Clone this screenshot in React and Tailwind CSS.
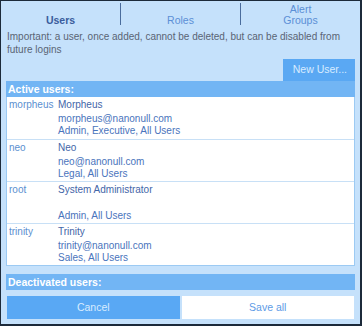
import React from "react";

const users = [
  { login: "morpheus", name: "Morpheus", email: "morpheus@nanonull.com", groups: "Admin, Executive, All Users" },
  { login: "neo", name: "Neo", email: "neo@nanonull.com", groups: "Legal, All Users" },
  { login: "root", name: "System Administrator", email: "", groups: "Admin, All Users" },
  { login: "trinity", name: "Trinity", email: "trinity@nanonull.com", groups: "Sales, All Users" },
];

const App = () => {
  return (
    <div className="w-[362px] h-[326px] bg-[#1c2a3a] p-px font-['Liberation_Sans',Arial,sans-serif] text-[10px]">
      <div className="h-[323px] w-[359px] bg-[#c5e1fb] flex flex-col">
        {/* tabs */}
        <div className="flex h-[26px] leading-[11px] text-[10.5px]">
          <div className="flex-1 flex items-end justify-center pb-[1px] font-bold text-[#3a5c9c]">Users</div>
          <div className="w-px bg-[#4a6c9c] my-[2px]" />
          <div className="flex-1 flex items-end justify-center pb-[1px] text-[#5b8fd6]">Roles</div>
          <div className="w-px bg-[#4a6c9c] my-[2px]" />
          <div className="flex-1 flex flex-col items-center justify-end pb-[1px] text-[#5b8fd6] leading-[11px]">
            <span>Alert</span>
            <span>Groups</span>
          </div>
        </div>

        <p className="pl-[6px] pr-[12px] pt-[3px] text-[10px] leading-[13px] text-[#5a6474]">
          Important: a user, once added, cannot be deleted, but can be disabled from future logins
        </p>

        <div className="flex justify-end pr-[5px] mt-[3px]">
          <button className="h-[22px] pl-[10px] pr-[8px] bg-[#5aa8f3] text-[#d8ecff] text-[10.5px]">New User...</button>
        </div>

        <div className="mx-[5px] h-[16px] bg-[#72b5f4] text-white font-bold leading-[16px] px-[2px] text-[10.5px]">
          Active users:
        </div>

        <div className="mx-[5px] bg-white border border-[#9ccaf3] border-t-0 flex flex-col">
          {users.map((u, i) => (
            <div
              key={u.login}
              className={`flex h-[42px] pt-[1px] ${i > 0 ? "border-t border-[#c8e0f6]" : ""}`}
            >
              <div className="w-[51px] pl-[2px] leading-[14px] text-[#5b8fd0]">{u.login}</div>
              <div className="flex flex-col">
                <span className="leading-[14px] text-[#4466a8]">{u.name}</span>
                <span className="leading-[12px] text-[#4a74bc] h-[12px] mt-[1px]">{u.email}</span>
                <span className="leading-[12px] text-[#4a74bc]">{u.groups}</span>
              </div>
            </div>
          ))}
        </div>

        <div className="mx-[5px] mt-[8px] h-[16px] bg-[#72b5f4] text-white font-bold leading-[16px] px-[2px] text-[10.5px]">
          Deactivated users:
        </div>

        <div className="flex mx-[6px] mt-[6px] gap-[2px] text-[10.5px]">
          <button className="flex-1 h-[23px] bg-[#59a8f4] text-[#d8ecff]">Cancel</button>
          <button className="flex-1 h-[23px] bg-white text-[#5d9be6]">Save all</button>
        </div>
      </div>
    </div>
  );
};

export default App;
